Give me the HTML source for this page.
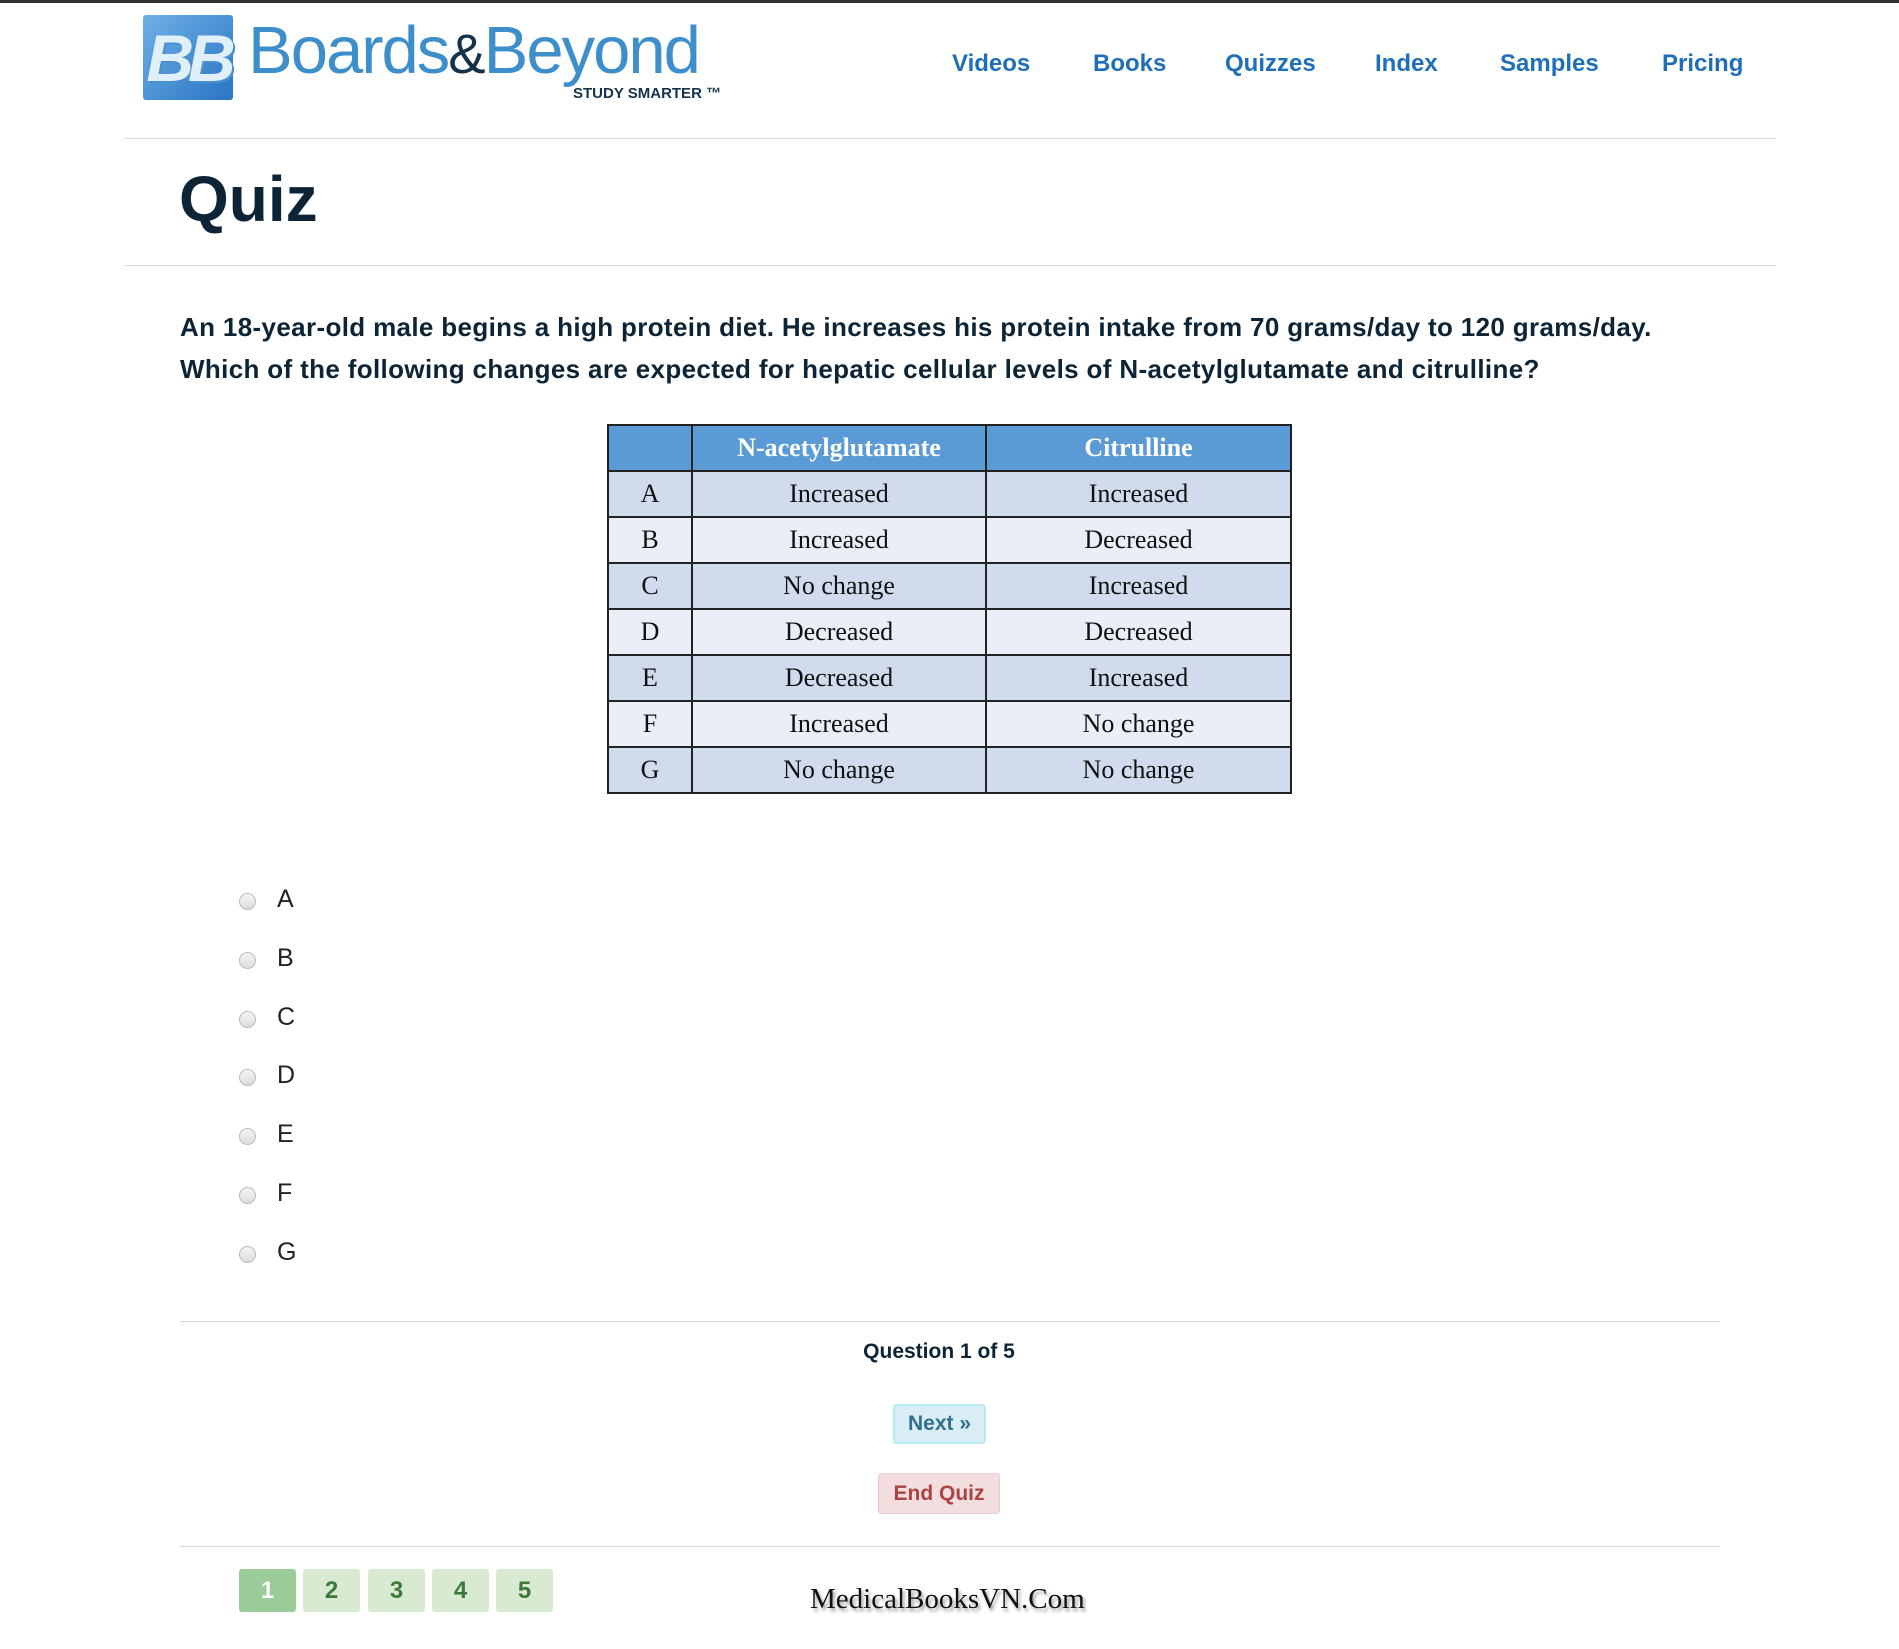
<!DOCTYPE html>
<html><head><meta charset="utf-8"><style>
*{margin:0;padding:0;box-sizing:border-box}
body{width:1899px;height:1649px;background:#fff;font-family:"Liberation Sans",sans-serif;position:relative;overflow:hidden}
.abs{position:absolute}
.nav a{position:absolute;top:50px;font-size:24px;color:#1f6fb8;font-weight:bold;text-decoration:none}
hr{position:absolute;border:0;border-top:1px solid #d6d6d6}
table{border-collapse:collapse;font-family:"Liberation Serif",serif;font-size:26px;color:#111}
td,th{border:2px solid #222;text-align:center;height:46px;padding:0}
th{background:#5b9bd5;color:#fff;font-weight:bold}
tr.o td{background:#d0dcee}tr.e td{background:#e9eef7}
.r{position:absolute;left:239px;width:17px;height:17px;border:1px solid #bbb;border-radius:50%;background:linear-gradient(#f4f4f4,#ddd)}
.rl{position:absolute;left:277px;font-size:25px;color:#222}
.pg{position:absolute;top:1569px;width:57px;height:43px;background:#d9ead3;color:#3c7a3c;font-weight:bold;font-size:24px;text-align:center;line-height:43px;border-radius:3px}
</style></head><body>
<div class="abs" style="left:0;top:0;width:1899px;height:3px;background:#333"></div>
<div class="abs" style="left:143px;top:15px;width:90px;height:85px;background:linear-gradient(135deg,#6fb0e6,#2a74c4);border-radius:3px"></div>
<div class="abs" style="left:143px;top:20px;width:90px;font-size:66px;font-weight:bold;color:#dff0fb;text-align:center;letter-spacing:-6px;font-style:italic;text-shadow:2px 2px 0 #4a90d0">BB</div>
<div class="abs" style="left:248px;top:12px;font-size:67px;color:#3d8fcc;letter-spacing:-2px">Boards<span style="color:#16324a;font-size:56px">&amp;</span>Beyond</div>
<div class="abs" style="left:573px;top:85px;font-size:15px;color:#16324a;font-weight:bold">STUDY SMARTER ™</div>
<div class="nav"><a style="left:952px">Videos</a><a style="left:1093px">Books</a><a style="left:1225px">Quizzes</a><a style="left:1375px">Index</a><a style="left:1500px">Samples</a><a style="left:1662px">Pricing</a></div>
<hr style="left:125px;width:1650px;top:138px">
<div class="abs" style="left:179px;top:162px;font-size:64px;font-weight:bold;color:#0d2436">Quiz</div>
<hr style="left:125px;width:1650px;top:265px">
<div class="abs" style="left:180px;top:306px;font-size:26px;font-weight:bold;color:#0d2436;line-height:42px;letter-spacing:0.35px;white-space:nowrap">An 18-year-old male begins a high protein diet. He increases his protein intake from 70 grams/day to 120 grams/day.<br>Which of the following changes are expected for hepatic cellular levels of N-acetylglutamate and citrulline?</div>
<table class="abs" style="left:607px;top:424px;width:685px">
<tr><th style="width:84px"></th><th style="width:294px">N-acetylglutamate</th><th>Citrulline</th></tr>
<tr class="o"><td>A</td><td>Increased</td><td>Increased</td></tr>
<tr class="e"><td>B</td><td>Increased</td><td>Decreased</td></tr>
<tr class="o"><td>C</td><td>No change</td><td>Increased</td></tr>
<tr class="e"><td>D</td><td>Decreased</td><td>Decreased</td></tr>
<tr class="o"><td>E</td><td>Decreased</td><td>Increased</td></tr>
<tr class="e"><td>F</td><td>Increased</td><td>No change</td></tr>
<tr class="o"><td>G</td><td>No change</td><td>No change</td></tr>
</table>
<div class="r" style="top:893px"></div><div class="rl" style="top:885px">A</div>
<div class="r" style="top:952px"></div><div class="rl" style="top:944px">B</div>
<div class="r" style="top:1011px"></div><div class="rl" style="top:1003px">C</div>
<div class="r" style="top:1069px"></div><div class="rl" style="top:1061px">D</div>
<div class="r" style="top:1128px"></div><div class="rl" style="top:1120px">E</div>
<div class="r" style="top:1187px"></div><div class="rl" style="top:1179px">F</div>
<div class="r" style="top:1246px"></div><div class="rl" style="top:1238px">G</div>
<hr style="left:180px;width:1540px;top:1321px">
<div class="abs" style="left:0;width:1878px;top:1340px;text-align:center;font-size:21px;font-weight:bold;color:#0d2436">Question 1 of 5</div>
<div class="abs" style="left:893px;top:1404px;width:93px;height:40px;background:#d9edf7;border:2px solid #bce8f1;border-radius:3px;color:#31708f;font-weight:bold;font-size:21px;text-align:center;line-height:36px">Next »</div>
<div class="abs" style="left:878px;top:1473px;width:122px;height:41px;background:#f2dede;border:1px solid #ebccd1;border-radius:3px;color:#a94442;font-weight:bold;font-size:21px;text-align:center;line-height:39px">End Quiz</div>
<hr style="left:180px;width:1540px;top:1546px">
<div class="pg" style="left:239px;background:#99cc99;color:#fff">1</div>
<div class="pg" style="left:303px">2</div>
<div class="pg" style="left:368px">3</div>
<div class="pg" style="left:432px">4</div>
<div class="pg" style="left:496px">5</div>
<div class="abs" style="left:810px;top:1583px;font-family:'Liberation Serif',serif;font-size:29px;color:#111;text-shadow:2px 3px 3px #999">MedicalBooksVN.Com</div>
</body></html>
